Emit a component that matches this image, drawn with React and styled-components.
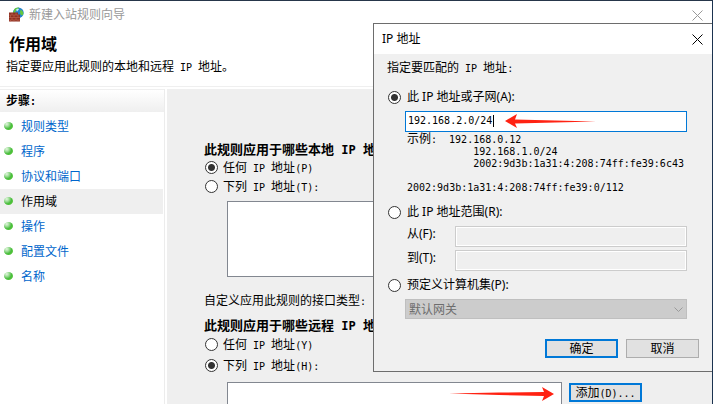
import React from 'react';
import styled, { createGlobalStyle, css } from 'styled-components';

const GlobalStyle = createGlobalStyle`
  * { box-sizing: border-box; }
  body { margin: 0; background: #fff; }
  body, button, input, select {
    font-family: 'Noto Sans', 'Noto Sans CJK SC', sans-serif;
    font-size: 12px;
    color: #000;
  }
`;

const Window = styled.div`
  position: relative;
  display: flex;
  flex-direction: column;
  height: 100vh;
  overflow: hidden;
  background: #fff;
  border-top: 1px solid #26364a;
  border-right: 1px solid #1b3350;
`;

const TitleBar = styled.div`
  display: flex;
  align-items: center;
  flex: none;
  gap: 5px;
  height: 28px;
  padding: 0 9px 0 8px;
  color: #999;
`;

const DialogTitleBar = styled(TitleBar)`
  height: 30px;
  background: #fff;
  color: #000;
`;

const TitleText = styled.span`
  flex: 1;
  line-height: 16px;
`;

const CloseButton = styled.button`
  display: flex;
  padding: 0;
  border: 0;
  background: none;
  color: inherit;
`;

const Header = styled.header`
  flex: none;
  padding: 0 6px 11px;
  border-bottom: 1px solid #efefef;
`;

const Heading = styled.h1`
  margin: 0 0 0 3px;
  font-size: 16px;
  line-height: 30px;
`;

const Line = styled.p`
  margin: 0;
  line-height: 16px;
  white-space: nowrap;
`;

const Latin = styled.span`
  font-family: 'DejaVu Sans Mono', monospace;
  font-size: ${(p) => (p.$large ? 12 : 10)}px;
  line-height: 0;
`;

const Body = styled.div`
  display: flex;
  flex: 1;
  min-height: 0;
  padding-top: 2px;
`;

const Sidebar = styled.nav`
  flex: none;
  width: 165px;
  margin-right: 2px;
  border-right: 1px solid #ececec;
`;

const SidebarTitle = styled.h2`
  margin: 0 0 2px;
  padding-left: 6px;
  border-top: 1px solid #efefef;
  background: linear-gradient(#fff, #efefef);
  font-size: 12px;
  line-height: 22px;
`;

const Steps = styled.ul`
  margin: 0;
  padding: 0;
  list-style: none;
`;

const Step = styled.li`
  display: flex;
  align-items: center;
  gap: 8px;
  height: 25px;
  margin-right: 1px;
  padding-left: 4px;
  background: ${(p) => (p.$current ? '#efefef' : '#fff')};
`;

const Orb = styled.i`
  width: 9px;
  height: 8px;
  margin-bottom: 2px;
  border-radius: 50%;
  background: radial-gradient(circle at 30% 25%, #e2f7dc 0, #a5dfa0 25%, #49bd3c 55%, #5ccb33 100%);
`;

const StepLink = styled.a`
  color: ${(p) => (p.$current ? '#000' : '#0066cc')};
  line-height: 16px;
  text-decoration: none;
`;

const Content = styled.main`
  flex: 1;
  min-width: 0;
  padding: 51px 37px 0;
  background: #efefef;
  overflow: hidden;
`;

const SectionTitle = styled.h2`
  margin: 0;
  font-size: 13px;
  line-height: 18px;
  white-space: nowrap;
`;

const RadioGroup = styled.div`
  display: grid;
  grid-auto-rows: ${(p) => p.$row}px;
  padding-left: 1px;
`;

const RadioLabel = styled.label`
  display: flex;
  align-items: center;
  gap: ${(p) => p.$gap || 5}px;
  line-height: 16px;
`;

const Radio = styled.input`
  appearance: none;
  flex: none;
  width: 13px;
  height: 13px;
  margin: 0;
  border: 1px solid #333;
  border-radius: 50%;
  background: #fff;
  &:checked {
    background: radial-gradient(circle, #333 0 3px, #fff 4px);
  }
`;

const ListRow = styled.div`
  display: grid;
  grid-template-columns: minmax(0, 335px) 73px;
  align-items: start;
  gap: 7px;
  margin: ${(p) => p.$top}px 0 0 23px;
`;

const AddressList = styled.div`
  position: relative;
  height: 76px;
  border: 1px solid #828790;
  background: #fff;
`;

const InterfaceLine = styled(Line)`
  margin: 16px 0 7px;
`;

const Button = styled.button`
  width: 73px;
  height: 19px;
  padding: 0;
  background: #e1e1e1;
  line-height: 14px;
  white-space: nowrap;
  ${(p) => (p.$primary
    ? css`border: 2px solid #0078d7;`
    : css`border: 1px solid #adadad;`)}
`;

const AddButton = styled(Button)`
  margin-top: 1px;
`;

const Dialog = styled.section`
  position: absolute;
  top: 22px;
  right: 0;
  width: 339px;
  border: 1px solid #6d6d6d;
  border-right: 0;
  background: #f0f0f0;
`;

const Form = styled.form`
  display: flex;
  flex-direction: column;
  padding: 6px 13px 13px;
`;

const Option = styled(RadioLabel)`
  margin: ${(p) => p.$top}px 0 6px 1px;
`;

const Inset = styled.div`
  margin: 0 12px 0 18px;
`;

const InputWrap = styled.div`
  position: relative;
`;

const TextInput = styled.input`
  display: block;
  width: 100%;
  height: 21px;
  padding: 0 2px 2px;
  border: 1px solid #0078d7;
  border-radius: 0;
  outline: 0;
  background: #fff;
  font-family: 'DejaVu Sans Mono', monospace;
  font-size: 10px;
  &:disabled {
    border-color: #ccc;
    background: #efefef;
    box-shadow: inset 0 0 0 1px #fff;
  }
`;

const Caret = styled.i`
  position: absolute;
  top: 4px;
  left: 88px;
  width: 1px;
  height: 12px;
  background: #000;
`;

const Arrow = styled.svg`
  position: absolute;
  top: ${(p) => p.$top}px;
  ${(p) => p.$side}: ${(p) => p.$offset}px;
  fill: #ff2212;
`;

const Examples = styled.pre`
  margin: 0 0 0 2px;
  font-family: 'Noto Sans CJK SC', sans-serif;
  font-size: 12px;
  line-height: 12px;
`;

const ExampleLine = styled.span`
  display: block;
  height: 12px;
`;

const Fields = styled.div`
  display: grid;
  grid-template-columns: 48px 1fr;
  row-gap: 3px;
  padding-left: 2px;
`;

const FieldLabel = styled.label`
  line-height: 15px;
`;

const SelectWrap = styled.div`
  position: relative;
`;

const Select = styled.select`
  appearance: none;
  display: block;
  width: 100%;
  height: 20px;
  padding: 0 3px;
  border: 1px solid #bfbfbf;
  border-radius: 0;
  background: #ccc;
  color: #6d6d6d;
  opacity: 1;
`;

const Chevron = styled.svg`
  position: absolute;
  top: 8px;
  right: 4px;
  fill: none;
  stroke: #9a9a9a;
`;

const Actions = styled.div`
  display: flex;
  justify-content: flex-end;
  gap: 8px;
  margin-top: 20px;
`;

const Mixed = ({ children, large }) =>
  children.split(/([\x20-\x7e]+)/).map((part, i) =>
    i % 2 ? <Latin key={i} $large={large}>{part}</Latin> : part
  );

const CloseIcon = () => (
  <svg width="11" height="11" viewBox="0 0 11 11" fill="none" stroke="currentColor">
    <path d="M.5 .5l10 10M10.5 .5l-10 10" />
  </svg>
);

const FirewallIcon = () => (
  <svg width="16" height="16" viewBox="0 0 16 16">
    <circle cx="10.3" cy="5.8" r="5.4" fill="#2582cf" />
    <path d="M6 3c1-2 3-2.6 5-2.4l-1 2-2 .8-1 2.4-2 .2zM12.500 2.500l2 1.500 1 2.500-1 2-2-1-.5-2z" fill="#65c83c" />
    <path d="M8 2.500l2-1 1 1-2 2z" fill="#bdeaff" />
    <path d="M1 5.500h9v2h2v7H1z" fill="#8e3022" />
    <path d="M1 8h9M1 10.500h11M1 13h11M4 5.500v2.500M8 5.500v2.500M2.500 8v2.500M6 8v2.500M10 8v2.500M4 10.500v2.500M8 10.500v2.500M2.500 13v1.500M6 13v1.500M10 13v1.500" stroke="#c66f58" strokeWidth=".5" />
  </svg>
);

const steps = ['规则类型', '程序', '协议和端口', '作用域', '操作', '配置文件', '名称'];

const examples = [
  '示例:  192.168.0.12',
  '           192.168.1.0/24',
  '           2002:9d3b:1a31:4:208:74ff:fe39:6c43',
  '',
  '2002:9d3b:1a31:4:208:74ff:fe39:0/112',
];

function ScopeRadio({ name, checked, children }) {
  return (
    <RadioLabel>
      <Radio type="radio" name={name} defaultChecked={checked} />
      <span><Mixed>{children}</Mixed></span>
    </RadioLabel>
  );
}

function MatchRadio({ top, checked, children }) {
  return (
    <Option $top={top} $gap={6}>
      <Radio type="radio" name="match" defaultChecked={checked} />
      {children}
    </Option>
  );
}

function IpDialog() {
  return (
    <Dialog role="dialog" aria-labelledby="ip-title">
      <DialogTitleBar>
        <TitleText id="ip-title">IP 地址</TitleText>
        <CloseButton type="button" aria-label="关闭"><CloseIcon /></CloseButton>
      </DialogTitleBar>
      <Form>
        <Line><Mixed>指定要匹配的 IP 地址:</Mixed></Line>
        <MatchRadio top={13} checked>此 IP 地址或子网(A):</MatchRadio>
        <Inset>
          <InputWrap>
            <TextInput aria-label="此 IP 地址或子网" defaultValue="192.168.2.0/24" />
            <Caret />
            <Arrow $top={3} $side="left" $offset={100} width="92" height="14" viewBox="0 0 92 14">
              <path d="M0 7L12 0L10 5.500L50 6.500L91 7.500L50 8.500L10 9.500L12 14Z" />
            </Arrow>
          </InputWrap>
          <Examples>
            {examples.map((line, i) => (
              <ExampleLine key={i}><Mixed>{line}</Mixed></ExampleLine>
            ))}
          </Examples>
        </Inset>
        <MatchRadio top={12}>此 IP 地址范围(R):</MatchRadio>
        <Inset>
          <Fields>
            <FieldLabel htmlFor="from">从(F):</FieldLabel>
            <TextInput id="from" disabled />
            <FieldLabel htmlFor="to">到(T):</FieldLabel>
            <TextInput id="to" disabled />
          </Fields>
        </Inset>
        <MatchRadio top={6}>预定义计算机集(P):</MatchRadio>
        <Inset>
          <SelectWrap>
            <Select aria-label="预定义计算机集" disabled>
              <option>默认网关</option>
            </Select>
            <Chevron width="9" height="6" viewBox="0 0 9 6"><path d="M.5 .5l4 4 4-4" /></Chevron>
          </SelectWrap>
        </Inset>
        <Actions>
          <Button type="button" $primary>确定</Button>
          <Button type="button">取消</Button>
        </Actions>
      </Form>
    </Dialog>
  );
}

export default function App() {
  return (
    <>
      <GlobalStyle />
      <Window>
        <TitleBar>
          <FirewallIcon />
          <TitleText>新建入站规则向导</TitleText>
          <CloseButton type="button" aria-label="关闭"><CloseIcon /></CloseButton>
        </TitleBar>
        <Header>
          <Heading>作用域</Heading>
          <Line><Mixed>指定要应用此规则的本地和远程 IP 地址。</Mixed></Line>
        </Header>
        <Body>
          <Sidebar>
            <SidebarTitle><Mixed>步骤:</Mixed></SidebarTitle>
            <Steps>
              {steps.map((name) => (
                <Step key={name} $current={name === '作用域'}>
                  <Orb />
                  <StepLink href="#" $current={name === '作用域'}>{name}</StepLink>
                </Step>
              ))}
            </Steps>
          </Sidebar>
          <Content>
            <SectionTitle><Mixed large>此规则应用于哪些本地 IP 地址?</Mixed></SectionTitle>
            <RadioGroup $row={19}>
              <ScopeRadio name="local" checked>任何 IP 地址(P)</ScopeRadio>
              <ScopeRadio name="local">下列 IP 地址(T):</ScopeRadio>
            </RadioGroup>
            <ListRow $top={5}><AddressList /></ListRow>
            <InterfaceLine><Mixed>自定义应用此规则的接口类型:</Mixed></InterfaceLine>
            <SectionTitle><Mixed large>此规则应用于哪些远程 IP 地址?</Mixed></SectionTitle>
            <RadioGroup $row={21}>
              <ScopeRadio name="remote">任何 IP 地址(Y)</ScopeRadio>
              <ScopeRadio name="remote" checked>下列 IP 地址(H):</ScopeRadio>
            </RadioGroup>
            <ListRow $top={6}>
              <AddressList>
                <Arrow $top={4} $side="right" $offset={7} width="105" height="14" viewBox="0 0 105 14">
                  <path d="M105 7L93 14L95 9L50 8L0 6.500L50 5.500L95 5L93 0Z" />
                </Arrow>
              </AddressList>
              <AddButton type="button" $primary><Mixed>添加(D)...</Mixed></AddButton>
            </ListRow>
          </Content>
        </Body>
        <IpDialog />
      </Window>
    </>
  );
}
